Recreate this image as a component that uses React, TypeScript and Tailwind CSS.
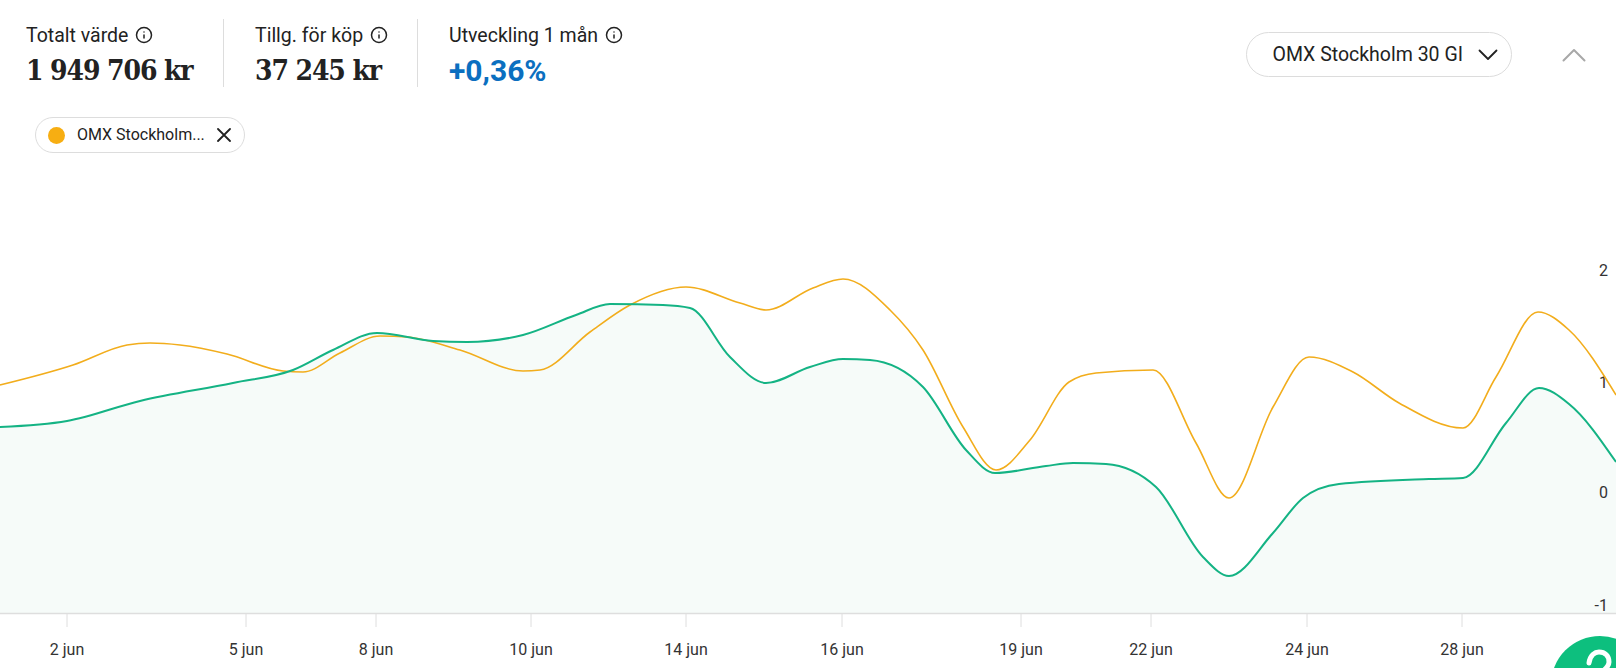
import { Info } from 'lucide-react'

type Pt = [number, number]

// page coordinates read off the reference
const green: Pt[] = [
  [0, 427], [67, 421], [140, 401], [233, 383], [293, 370], [333, 350], [377, 333], [433, 341],
  [467, 342], [523, 335], [576, 315], [610, 304], [663, 305], [690, 308], [730, 357], [766, 383],
  [810, 367], [843, 359], [870, 360], [923, 387], [966, 450], [995, 473], [1046, 466], [1073, 463],
  [1106, 464], [1156, 487], [1203, 557], [1229, 576], [1273, 533], [1303, 498], [1339, 484],
  [1429, 479], [1463, 478], [1506, 423], [1539, 388], [1569, 404], [1616, 462],
]

const yellow: Pt[] = [
  [0, 385], [73, 365], [127, 345], [150, 343], [180, 345], [227, 354], [283, 371], [303, 372],
  [340, 353], [380, 336], [407, 337], [460, 350], [523, 371], [540, 370], [590, 332], [630, 305],
  [686, 287], [740, 303], [766, 310], [813, 288], [843, 279], [890, 310], [923, 350], [963, 427],
  [996, 470], [1030, 440], [1069, 382], [1096, 373], [1153, 370], [1196, 443], [1229, 498],
  [1273, 407], [1309, 357], [1353, 372], [1399, 403], [1463, 428], [1496, 377], [1538, 312],
  [1569, 330], [1616, 395],
]

const ticks: [number, string][] = [
  [67, '2 jun'], [246, '5 jun'], [376, '8 jun'], [531, '10 jun'], [686, '14 jun'],
  [842, '16 jun'], [1021, '19 jun'], [1151, '22 jun'], [1307, '24 jun'], [1462, '28 jun'],
]

const yLabels: [number, string][] = [[270, '2'], [382, '1'], [492, '0'], [605, '-1']]

// monotone cubic (like d3 curveMonotoneX)
function monotone(pts: Pt[]) {
  const n = pts.length
  const s: number[] = []
  for (let i = 0; i < n - 1; i++) s.push((pts[i + 1][1] - pts[i][1]) / (pts[i + 1][0] - pts[i][0]))
  const m: number[] = new Array(n).fill(0)
  for (let i = 1; i < n - 1; i++) {
    const h0 = pts[i][0] - pts[i - 1][0]
    const h1 = pts[i + 1][0] - pts[i][0]
    const s0 = s[i - 1], s1 = s[i]
    if (s0 * s1 <= 0) { m[i] = 0; continue }
    const p = (s0 * h1 + s1 * h0) / (h0 + h1)
    m[i] = (Math.sign(s0) + Math.sign(s1)) * Math.min(Math.abs(s0), Math.abs(s1), 0.5 * Math.abs(p))
  }
  m[0] = (3 * s[0] - m[1]) / 2
  m[n - 1] = (3 * s[n - 2] - m[n - 2]) / 2
  let d = `M${pts[0][0]},${pts[0][1]}`
  for (let i = 0; i < n - 1; i++) {
    const [x0, y0] = pts[i]
    const [x1, y1] = pts[i + 1]
    const h = (x1 - x0) / 3
    d += ` C${(x0 + h).toFixed(1)},${(y0 + m[i] * h).toFixed(1)} ${(x1 - h).toFixed(1)},${(y1 - m[i + 1] * h).toFixed(1)} ${x1},${y1}`
  }
  return d
}

const AXIS_Y = 613
const TOP = 160

function Stat({ label, value, className, valueClass }: { label: string, value: string, className: string, valueClass: string }) {
  return (
    <div className={`h-[68px] pt-[6px] ${className}`}>
      <div className="flex items-center gap-[7px] text-[19.5px] leading-[22px] text-[#222]">
        <span>{label}</span>
        <Info size={18} strokeWidth={2} className="-mt-[3px] text-[#222]" />
      </div>
      <div className={`mt-[6px] leading-[36px] font-bold ${valueClass}`}>{value}</div>
    </div>
  )
}

const slab = "font-['DejaVu_Serif_Condensed','DejaVu_Serif',serif] text-[28px] tracking-[-1.1px] text-[#222]"

export default function App() {
  const greenPath = monotone(green)
  const areaPath = `${greenPath} L1616,${AXIS_Y} L0,${AXIS_Y} Z`
  return (
    <div className="relative w-[1616px] h-[668px] overflow-hidden bg-white font-['Roboto',sans-serif] text-[#222]">
      <div className="flex items-start justify-between pl-[26px] pr-[30px] pt-[19px]">
        <div className="flex">
          <Stat label="Totalt värde" value="1 949 706 kr" className="w-[198px] border-r border-[#dddddd]" valueClass={slab} />
          <Stat label="Tillg. för köp" value="37 245 kr" className="w-[194px] pl-[31px] border-r border-[#dddddd]" valueClass={slab} />
          <Stat label="Utveckling 1 mån" value="+0,36%" className="pl-[31px]" valueClass="text-[30px] text-[#0b6fc0]" />
        </div>
        <div className="mt-[13px] flex items-center gap-[50px]">
          <button className="flex h-[45px] items-center gap-[15px] rounded-full border border-[#dcdcdc] pl-[25px] pr-[13px] text-[19.5px] text-[#222]">
            <span>OMX Stockholm 30 GI</span>
            <svg width="20" height="12" viewBox="0 0 20 12" fill="none" stroke="#222" strokeWidth="1.8" strokeLinecap="round" strokeLinejoin="round">
              <path d="M1.5 1.5 L10 10 L18.5 1.5" />
            </svg>
          </button>
          <svg width="24" height="14" viewBox="0 0 24 14" fill="none" stroke="#a8a8a8" strokeWidth="2" strokeLinecap="round" strokeLinejoin="round">
            <path d="M1.5 12.5 L12 2 L22.5 12.5" />
          </svg>
        </div>
      </div>

      <div className="mt-[30px] ml-[35px] inline-flex h-[36px] items-center gap-[12px] rounded-full border border-[#dddddd] pl-[12px] pr-[13px]">
        <span className="h-[17px] w-[17px] rounded-full bg-[#f7ae12]" />
        <span className="text-[16px] text-[#222]">OMX Stockholm...</span>
        <svg width="14" height="14" viewBox="0 0 14 14" fill="none" stroke="#222" strokeWidth="1.8" strokeLinecap="round">
          <path d="M1 1 L13 13 M13 1 L1 13" />
        </svg>
      </div>

      <svg className="mt-[7px] block" width="1616" height="508" viewBox={`0 ${TOP} 1616 508`}>
        <path d={areaPath} fill="#f6fbf9" />
        <line x1="0" y1={AXIS_Y + 0.5} x2="1616" y2={AXIS_Y + 0.5} stroke="#dedede" strokeWidth="1.5" />
        {ticks.map(([x, t]) => (
          <g key={t}>
            <line x1={x} y1={AXIS_Y} x2={x} y2={AXIS_Y + 14} stroke="#dedede" strokeWidth="1" />
            <text x={x} y={655} textAnchor="middle" fontSize="16" fill="#333" fontFamily="Roboto, sans-serif">{t}</text>
          </g>
        ))}
        {yLabels.map(([y, t]) => (
          <text key={t} x={1608} y={y + 6} textAnchor="end" fontSize="16" fill="#333" fontFamily="Roboto, sans-serif">{t}</text>
        ))}
        <path d={monotone(yellow)} fill="none" stroke="#f2ad1c" strokeWidth="1.6" />
        <path d={greenPath} fill="none" stroke="#14b384" strokeWidth="2" />
      </svg>

      {/* help button, mostly below the fold */}
      <button aria-label="Hjälp" className="absolute left-[1551px] top-[636px] h-[98px] w-[98px] rounded-full bg-[#0dbf7e]">
        <svg className="absolute left-0 top-0" width="98" height="98" viewBox="0 0 98 98" fill="none" stroke="#fff" strokeWidth="5" strokeLinecap="round">
          <path d="M38 27 C39 19 44 16 48 16 C54 16 58 20 58 26 C58 31 54 33 51 36" />
        </svg>
      </button>
    </div>
  )
}
